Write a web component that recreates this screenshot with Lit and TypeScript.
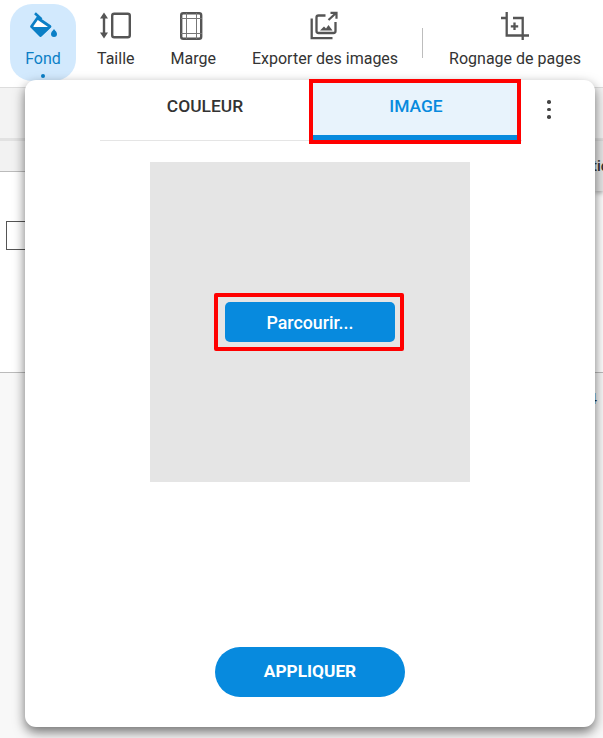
import { LitElement, html, css } from "lit";
import { customElement } from "lit/decorators.js";

@customElement("app-root")
export class AppRoot extends LitElement {
  static styles = css`
    :host { display: block; position: relative; width: 603px; height: 738px; overflow: hidden; background: #fff; font-family: Roboto, "Liberation Sans", sans-serif; color: #333; }
    * { box-sizing: border-box; }
    .toolbar { display: flex; align-items: flex-start; height: 87px; padding-left: 10px; }
    .tool { display: flex; flex-direction: column; align-items: center; padding: 8px 18px 0; font-size: 16px; white-space: nowrap; }
    .tool svg { display: block; width: 36px; height: 36px; }
    .tool span { margin-top: 6px; line-height: 18px; }
    .fond { position: relative; width: 66px; height: 77px; margin: 4px 3px 0 0; padding: 4px 0 0; background: #d2e9fd; border-radius: 22px; color: #0b7fc6; }
    .fond i { position: absolute; left: 31px; top: 70px; width: 4px; height: 4px; border-radius: 50%; background: #0b7fc6; }
    .sep { width: 1px; height: 30px; margin: 28px 8px 0 6px; background: #bdbdbd; }
    .band { height: 51px; background: #f3f3f3; border-top: 1px solid #ddd; }
    .strip { height: 3px; background: #e2e2e2; }
    .head { height: 31px; background: #f2f2f2; border-bottom: 1px solid #bbb; }
    .body { height: 201px; padding: 49px 0 0 6px; border-bottom: 1px solid #bbb; }
    .check { width: 40px; height: 29px; border: 1px solid #555; background: #fff; }
    .foot { height: 366px; background: #f8f8f8; display: flex; justify-content: flex-end; padding-top: 17px; font-size: 15px; line-height: 18px; color: #123; }
    .foot span { margin-right: 6px; }
    .peek { position: absolute; right: 0; top: 141px; width: 8px; height: 50px; overflow: hidden; background: #e6e6e6; box-shadow: 0 2px 5px rgba(0,0,0,.35); font-size: 15px; line-height: 18px; padding-top: 16px; white-space: nowrap; font-weight: 500; text-indent: -3px; }
    .dialog { position: absolute; left: 25px; top: 80px; width: 570px; height: 647px; background: #fff; border-radius: 11px; box-shadow: 0 5px 12px rgba(0,0,0,.55); display: flex; flex-direction: column; align-items: center; }
    .tabs { align-self: stretch; display: flex; height: 61px; margin-left: 75px; padding-top: 3px; }
    .tablist { display: flex; width: 422px; border-bottom: 1px solid #e5e5e5; }
    .tab { font-size: 17.4px; font-weight: 500; line-height: 20px; text-align: center; padding-top: 13px; }
    .tab.a { width: 213px; padding-right: 3px; color: #333; }
    .tab.b { width: 204px; height: 57px; padding-left: 2px; color: #078ade; background: #e8f3fc; border-bottom: 5px solid #078ade; outline: 4px solid #f00; }
    .kebab { display: flex; flex-direction: column; gap: 4px; margin: 17px 0 0 25px; }
    .kebab i { width: 3.500px; height: 3.500px; border-radius: 50%; background: #444; }
    .drop { width: 320px; height: 320px; margin-top: 21px; background: #e5e5e5; display: flex; align-items: center; padding-left: 64px; }
    .frame { border: 4px solid #f00; border-radius: 2px; padding: 5px 5px 5px 7px; }
    .browse { width: 170px; height: 40px; border-radius: 5px; background: #078ade; color: #fff; font-size: 17.800px; font-weight: 500; display: flex; align-items: center; justify-content: center; }
    .apply { width: 190px; height: 50px; margin-top: auto; margin-bottom: 30px; border-radius: 25px; background: #078ade; color: #fff; font-size: 17.300px; font-weight: 700; display: flex; align-items: center; justify-content: center; padding-bottom: 2px; }
  `;

  render() {
    return html`
      <div class="toolbar">
        <div class="tool fond">
          <svg viewBox="25 8 36 36">
            <path d="M35 13.3l6.5 6" fill="none" stroke="#0b7fc6" stroke-width="2.6"/>
            <path d="M37.5 18L50 26.5 40.5 35.5 31.5 26.5Z" fill="#fff" stroke="#0b7fc6" stroke-width="2.8" stroke-linejoin="round"/>
            <path d="M31 27H51L40.5 37Z" fill="#0b7fc6"/>
            <path d="M54 29c1.5 2 3 3.300 3 5a3 3 0 0 1-6 0c0-1.700 1.500-3 3-5Z" fill="#0b7fc6"/>
          </svg>
          <span>Fond</span><i></i>
        </div>
        <div class="tool">
          <svg viewBox="98 8 36 36">
            <path d="M104 15V36" fill="none" stroke="#555" stroke-width="2.4"/>
            <path d="M100 18.500L104 12.500 108 18.500ZM100 32.500L104 38.500 108 32.500Z" fill="#555"/>
            <rect x="112.200" y="13.700" width="17.600" height="23.600" rx="2" fill="none" stroke="#555" stroke-width="2.400"/>
          </svg>
          <span>Taille</span>
        </div>
        <div class="tool">
          <svg viewBox="175 8 36 36">
            <rect x="181.200" y="13.200" width="20" height="25.600" rx="2" fill="none" stroke="#555" stroke-width="2.400"/>
            <path d="M186.500 13V39M196.500 13V39M181 18.500H202M181 33.500H202" fill="none" stroke="#777" stroke-width="1"/>
          </svg>
          <span>Marge</span>
        </div>
        <div class="tool">
          <svg viewBox="306.500 8 36 36">
            <path d="M311.200 18.500V38.200H332" fill="none" stroke="#555" stroke-width="2.300"/>
            <path d="M325 15.500H318a2 2 0 0 0-2 2V31a2 2 0 0 0 2 2h15a2 2 0 0 0 2-2V22" fill="none" stroke="#555" stroke-width="2.300"/>
            <path d="M328 20L335 13.500M330 12.800H336V18.800" fill="none" stroke="#555" stroke-width="2.200"/>
            <path d="M319.500 30.500L323.500 26.500 325.500 28.500 328 25 332 30.500Z" fill="#555"/>
          </svg>
          <span>Exporter des images</span>
        </div>
        <div class="sep"></div>
        <div class="tool">
          <svg viewBox="496 8 36 36">
            <path d="M505.700 12V35.500H528M500 18H505.700M512 18H521.700V40" fill="none" stroke="#555" stroke-width="2.300"/>
            <path d="M513.500 22.500V30M509.800 26.300H517.200" fill="none" stroke="#555" stroke-width="2.300"/>
          </svg>
          <span>Rognage de pages</span>
        </div>
      </div>
      <div class="band"></div>
      <div class="strip"></div>
      <div class="head"></div>
      <div class="body"><div class="check"></div></div>
      <div class="foot"><span>4</span></div>
      <div class="peek">tic</div>
      <div class="dialog">
        <div class="tabs">
          <div class="tablist">
            <div class="tab a">COULEUR</div>
            <div class="tab b">IMAGE</div>
          </div>
          <div class="kebab"><i></i><i></i><i></i></div>
        </div>
        <div class="drop">
          <div class="frame"><div class="browse">Parcourir...</div></div>
        </div>
        <div class="apply">APPLIQUER</div>
      </div>
    `;
  }
}
